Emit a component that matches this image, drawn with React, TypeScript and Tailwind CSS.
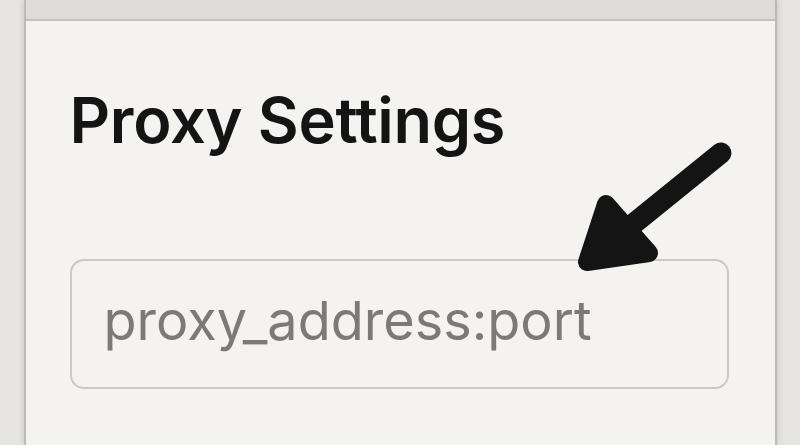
export default function App() {
  return (
    <div className="w-[800px] h-[445px] bg-[#e6e4e1] flex justify-center overflow-hidden" style={{ fontFamily: 'Inter, "Noto Sans", sans-serif' }}>
      <div className="w-[753px] h-full bg-[#f5f3f0] border-x-2 border-[#bdbbb8] flex flex-col shadow-[0_0_6px_rgba(0,0,0,0.15)]">
        <div className="h-[21px] bg-[#dedcd8] border-b-2 border-[#c4c2be] shrink-0" />
        <div className="relative flex-1 px-[44px]">
          <h1 className="mt-[68px] text-[63px] leading-none font-semibold text-[#141414] tracking-[-0.3px]">Proxy Settings</h1>
          <div className="mt-[107px] h-[130px] w-[659px] border-2 border-[#cbc9c6] rounded-[14px] bg-[#f5f3f0] flex items-center pl-[32px]">
            <span className="text-[54px] text-[#7b7a78] leading-none pb-[6px]">proxy_address:port</span>
          </div>
          <svg className="absolute left-0 top-0" width="753" height="420" viewBox="0 0 753 420">
            <g transform="translate(-25,-21)" fill="#141414" stroke="#141414" strokeLinecap="round" strokeLinejoin="round">
              <line x1="720" y1="153" x2="615" y2="238" strokeWidth="21" />
              <polygon points="586,262 605,204 648,253" strokeWidth="18" />
            </g>
          </svg>
        </div>
      </div>
    </div>
  );
}
